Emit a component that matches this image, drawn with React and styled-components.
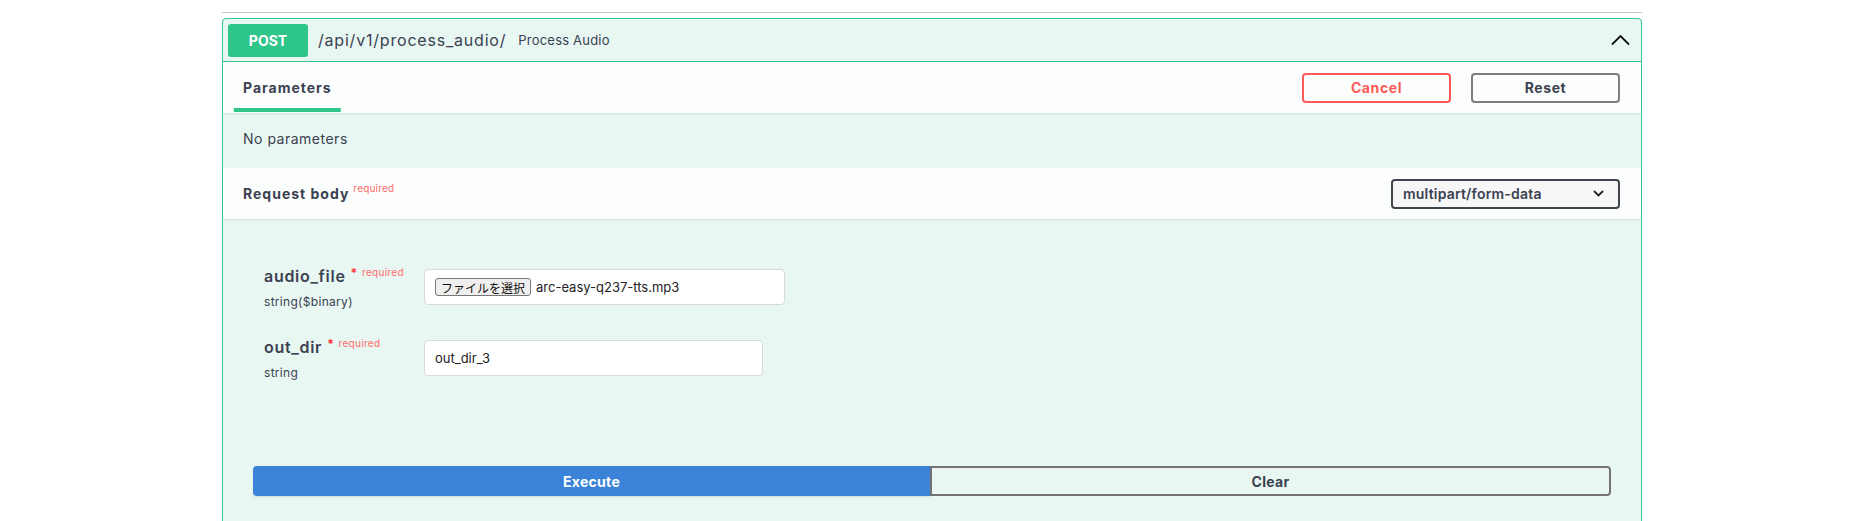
import React from "react";
import styled, { createGlobalStyle } from "styled-components";

const GlobalStyle = createGlobalStyle`
  html, body {
    margin: 0;
    padding: 0;
    background: #ffffff;
  }
  body {
    font-family: Inter, "Noto Sans", "Liberation Sans", sans-serif;
    color: #3b4151;
  }
`;

const Page = styled.div`
  width: 1420px;
  margin-left: 222px;
  padding-top: 12px;
`;

const TagLine = styled.div`
  height: 1px;
  background: #c8c9cd;
  margin-bottom: 5px;
`;

const Opblock = styled.div`
  border: 1px solid #36c68b;
  border-radius: 4px;
  background: #e8f7f1;
  overflow: hidden;
  min-height: 540px;
`;

const Summary = styled.div`
  display: flex;
  align-items: center;
  height: 42px;
  padding: 0 11px 0 5px;
  border-bottom: 1px solid #36c68b;
`;

const Method = styled.span`
  width: 80px;
  height: 33px;
  display: flex;
  align-items: center;
  justify-content: center;
  border-radius: 3px;
  background: #2fc68b;
  color: #fff;
  font-size: 14px;
  font-weight: 700;
`;

const Path = styled.span`
  margin-left: 10px;
  font-size: 16px;
  letter-spacing: 0.8px;
  color: #3b4151;
`;

const Desc = styled.span`
  margin-left: 12px;
  font-size: 13px;
  letter-spacing: 0.2px;
  color: #3b4151;
  flex: 1;
`;

const SectionHeader = styled.div`
  display: flex;
  align-items: center;
  justify-content: space-between;
  height: 51px;
  padding: 0 20px;
  background: rgba(255, 255, 255, 0.8);
  box-shadow: 0 1px 2px rgba(0, 0, 0, 0.1);
  position: relative;
`;

const TabTitle = styled.span`
  position: relative;
  font-size: 14px;
  font-weight: 700;
  letter-spacing: 1px;
  color: #3b4151;

  &::after {
    content: "";
    position: absolute;
    left: 50%;
    bottom: -16px;
    width: 120%;
    height: 4px;
    transform: translateX(-50%);
    background: #2fc68b;
  }
`;

const HeaderTitle = styled.span`
  font-size: 14px;
  font-weight: 700;
  letter-spacing: 1px;
  color: #3b4151;
`;

const Sup = styled.span`
  position: relative;
  top: -7px;
  margin-left: 4px;
  font-size: 10px;
  font-weight: 400;
  letter-spacing: 0.2px;
  color: #ff6b6b;
`;

const Actions = styled.div`
  display: flex;
  gap: 20px;
  padding-right: 1px;
`;

const OutlineButton = styled.button`
  width: 149px;
  height: 30px;
  box-sizing: border-box;
  border: 2px solid ${(p) => (p.$danger ? "#ff5a5a" : "#7d7d7d")};
  border-radius: 4px;
  background: transparent;
  color: ${(p) => (p.$danger ? "#ff5a5a" : "#3b4151")};
  font-family: inherit;
  font-size: 14px;
  font-weight: 700;
  letter-spacing: 0.6px;
`;

const NoParams = styled.div`
  height: 55px;
  padding: 0 20px 4px;
  box-sizing: border-box;
  display: flex;
  align-items: center;
  font-size: 14px;
  letter-spacing: 0.5px;
  color: #3b4151;
`;

const SelectBox = styled.div`
  width: 229px;
  height: 30px;
  box-sizing: border-box;
  margin-right: 1px;
  border: 2px solid #41444e;
  border-radius: 4px;
  background: #f7f7f7;
  display: flex;
  align-items: center;
  justify-content: space-between;
  padding: 0 14px 0 10px;
  font-size: 14px;
  font-weight: 600;
  letter-spacing: 0.2px;
  color: #3b4151;
`;

const Body = styled.div`
  padding: 47px 30px 0 41px;
`;

const ParamRow = styled.div`
  display: grid;
  grid-template-columns: 160px 1fr;
  padding-bottom: 27px;
`;

const ParamLabel = styled.div`
  display: flex;
  flex-direction: column;
`;

const ParamName = styled.div`
  height: 20px;
  line-height: 20px;
  font-size: 16px;
  font-weight: 600;
  letter-spacing: 0.7px;
  color: #3b4151;
  white-space: nowrap;
`;

const Star = styled.span`
  position: relative;
  top: -5px;
  margin-left: 5px;
  font-size: 12px;
  font-weight: 700;
  color: #ff3030;
`;

const Required = styled.span`
  position: relative;
  top: -6px;
  margin-left: 4px;
  font-size: 10px;
  font-weight: 400;
  letter-spacing: 0.3px;
  color: #ff6b6b;
`;

const ParamType = styled.div`
  margin-top: 8px;
  line-height: 16px;
  font-size: 12px;
  letter-spacing: 0.3px;
  color: #3b4151;
`;

const InputBox = styled.div`
  margin-top: 3px;
  width: ${(p) => p.$width}px;
  height: 36px;
  box-sizing: border-box;
  border: 1px solid #d9d9d9;
  border-radius: 4px;
  background: #fff;
  display: flex;
  align-items: center;
  padding: 0 10px;
  font-size: 13px;
  color: #222;
`;

const FileButton = styled.span`
  height: 18px;
  box-sizing: border-box;
  display: inline-flex;
  align-items: center;
  padding: 0 5px;
  margin-right: 5px;
  border: 1px solid #767676;
  border-radius: 3px;
  background: #efefef;
  font-family: "Noto Sans CJK JP", sans-serif;
  font-size: 12px;
  color: #111;
`;

const TextInput = styled.input`
  width: 339px;
  height: 36px;
  margin-top: 3px;
  box-sizing: border-box;
  border: 1px solid #d9d9d9;
  border-radius: 4px;
  background: #fff;
  padding: 0 10px;
  font-family: inherit;
  font-size: 13px;
  color: #222;
  outline: none;
`;

const ButtonGroup = styled.div`
  display: flex;
  margin: 58px 0 0 -11px;
`;

const ExecuteButton = styled.button`
  flex: 1;
  height: 30px;
  border: none;
  border-radius: 4px 0 0 4px;
  background: #3a83d9;
  color: #fff;
  font-family: inherit;
  font-size: 14px;
  font-weight: 700;
  letter-spacing: 0.3px;
  box-shadow: 0 1px 2px rgba(0, 0, 0, 0.1);
`;

const ClearButton = styled.button`
  flex: 1;
  height: 30px;
  box-sizing: border-box;
  border: 2px solid #737373;
  border-radius: 0 4px 4px 0;
  background: transparent;
  color: #3b4151;
  font-family: inherit;
  font-size: 14px;
  font-weight: 700;
  letter-spacing: 0.3px;
`;

const ChevronUp = () => (
  <svg width="19" height="12" viewBox="0 0 19 12">
    <polyline points="1,10.5 9.5,2 18,10.5" fill="none" stroke="#111" strokeWidth="1.8" />
  </svg>
);

const ChevronDown = () => (
  <svg width="11" height="7" viewBox="0 0 11 7">
    <polyline points="1,1 5.5,5.5 10,1" fill="none" stroke="#222" strokeWidth="1.8" />
  </svg>
);

export default function App() {
  return (
    <>
      <GlobalStyle />
      <Page>
        <TagLine />
        <Opblock>
          <Summary>
            <Method>POST</Method>
            <Path>/api/v1/process_audio/</Path>
            <Desc>Process Audio</Desc>
            <ChevronUp />
          </Summary>

          <SectionHeader>
            <TabTitle>Parameters</TabTitle>
            <Actions>
              <OutlineButton $danger>Cancel</OutlineButton>
              <OutlineButton>Reset</OutlineButton>
            </Actions>
          </SectionHeader>

          <NoParams>No parameters</NoParams>

          <SectionHeader>
            <HeaderTitle>
              Request body<Sup>required</Sup>
            </HeaderTitle>
            <SelectBox>
              <span>multipart/form-data</span>
              <ChevronDown />
            </SelectBox>
          </SectionHeader>

          <Body>
            <ParamRow>
              <ParamLabel>
                <ParamName>
                  audio_file<Star>*</Star>
                  <Required>required</Required>
                </ParamName>
                <ParamType>string($binary)</ParamType>
              </ParamLabel>
              <InputBox $width={361}>
                <FileButton>ファイルを選択</FileButton>
                arc-easy-q237-tts.mp3
              </InputBox>
            </ParamRow>
            <ParamRow>
              <ParamLabel>
                <ParamName>
                  out_dir<Star>*</Star>
                  <Required>required</Required>
                </ParamName>
                <ParamType>string</ParamType>
              </ParamLabel>
              <TextInput defaultValue="out_dir_3" readOnly />
            </ParamRow>
            <ButtonGroup>
              <ExecuteButton>Execute</ExecuteButton>
              <ClearButton>Clear</ClearButton>
            </ButtonGroup>
          </Body>
        </Opblock>
      </Page>
    </>
  );
}
